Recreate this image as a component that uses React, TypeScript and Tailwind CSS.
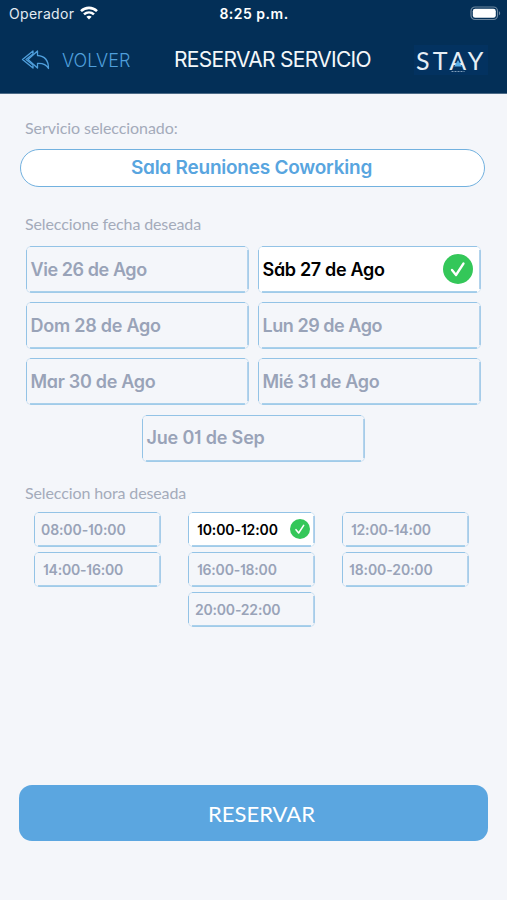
import { useState } from 'react'

interface Slot {
  label: string
  style: string
}

const days: Slot[] = [
  { label: 'Vie 26 de Ago', style: 'tracking-[-0.42px]' },
  { label: 'Sáb 27 de Ago', style: 'tracking-[-0.32px]' },
  { label: 'Dom 28 de Ago', style: 'tracking-[-0.25px]' },
  { label: 'Lun 29 de Ago', style: 'tracking-[-0.46px]' },
  { label: 'Mar 30 de Ago', style: 'tracking-[-0.3px]' },
  { label: 'Mié 31 de Ago', style: 'tracking-[-0.35px]' },
  { label: 'Jue 01 de Sep', style: 'tracking-[-0.18px]' },
]

const hours: Slot[] = [
  { label: '08:00-10:00', style: 'pl-[6px] tracking-[-0.1px]' },
  { label: '10:00-12:00', style: 'pl-[8px] tracking-[-0.1px]' },
  { label: '12:00-14:00', style: 'pl-[8px] tracking-[-0.2px]' },
  { label: '14:00-16:00', style: 'pl-[8px] tracking-[-0.2px]' },
  { label: '16:00-18:00', style: 'pl-[8px] tracking-[-0.2px]' },
  { label: '18:00-20:00', style: 'pl-[6px] tracking-[-0.1px]' },
  { label: '20:00-22:00', style: 'pl-[6px] tracking-[-0.2px]' },
]

// edge lines that stop short of the corners, over a faint full outline
const edges =
  'rounded-[5px] border border-[#93c4e7]/40 bg-origin-border bg-no-repeat bg-[image:linear-gradient(#93c4e7,#93c4e7),linear-gradient(#a9d0eb,#a9d0eb),linear-gradient(#93c4e7,#93c4e7),linear-gradient(#b3d3ec,#b3d3ec)] bg-[position:center_top,center_bottom,left_center,right_center] bg-[size:calc(100%_-_8px)_1px,calc(100%_-_8px)_2px,1px_calc(100%_-_8px),2px_calc(100%_-_8px)]'

function CheckBadge({ className }: { className: string }) {
  return (
    <svg viewBox="0 0 30 30" className={className}>
      <circle cx="15" cy="15" r="15" fill="#34c759" />
      <path d="M9 16l4 5L20.500 9.500" fill="none" stroke="#fff" strokeWidth="2.3" strokeLinecap="round" strokeLinejoin="round" />
    </svg>
  )
}

function StatusBar() {
  return (
    <div className="grid h-7 grid-cols-3 items-center pl-[9px] pr-[6px] text-[14px] text-white">
      <div className="flex items-center gap-[5px]">
        <span className="-mt-px w-[66px] tracking-[0.3px] text-[#e3ebf2]">Operador</span>
        <svg viewBox="0 0 18 14" className="-mt-0.5 h-[14px] w-[18px]" fill="none" stroke="#fff" strokeWidth="2.6">
          <path d="M1 5.1C5.5.8 12.5.8 17 5.1" />
          <path d="M4 8.400c2.900-2.600 7.100-2.600 10 0" />
          <path d="M6.400 10.700c1.500-1.300 3.700-1.300 5.200 0L9 13.600z" fill="#fff" stroke="none" />
        </svg>
      </div>
      <span className="-ml-[2px] -mt-px text-center font-semibold tracking-[0.5px]">8:25 p.m.</span>
      <svg viewBox="0 0 31 15" className="-mt-0.5 h-[15px] w-[31px] justify-self-end">
        <rect x="1" y="1" width="26.5" height="12.5" rx="4" fill="none" stroke="#6d879f" strokeWidth="1.2" />
        <rect x="2.800" y="2.800" width="23" height="9" rx="2.4" fill="#fff" />
        <path d="M29 5.300c1.600.7 1.600 3.300 0 4z" fill="#6d879f" />
      </svg>
    </div>
  )
}

function Logo() {
  return (
    <div className="relative h-[30px] w-[74px] bg-[#03366a]/50">
      <span className="block pl-[2px] font-['Lato',sans-serif] text-[25px] leading-[30px] tracking-[3.3px] text-[#e6eef5]">STAY</span>
      <svg viewBox="0 0 20 14" className="absolute left-[34px] top-[14px] h-[14px] w-[20px]">
        <path d="M10 1l3.800 6.500H6.200z" fill="#58aee8" />
        <path d="M3.500 12.500h13" stroke="#7f9cb8" strokeWidth="1" strokeDasharray="2 1" />
      </svg>
    </div>
  )
}

export default function App() {
  const [day, setDay] = useState('Sáb 27 de Ago')
  const [hour, setHour] = useState('10:00-12:00')

  return (
    <div className="flex h-[900px] w-[507px] flex-col bg-[#f4f6fa] font-['Inter',sans-serif]">
      <header className="h-[94px] border-b border-[#4c6b87] bg-[#032f57]">
        <StatusBar />
        <div className="flex h-[64px] items-center pl-[21px] pr-[19px]">
          <button className="flex w-[153px] items-center gap-3 text-[18px] font-light text-[#4f9fdc]">
            <svg viewBox="0 0 29 20" className="h-5 w-[29px]" fill="none" stroke="#4f9fdc" strokeWidth="1.3" strokeLinejoin="round">
              <path d="M16.500 1L7 9.500l9.500 8.500v-4.500c5-.3 8.500.5 11 5C27.500 10 23 6 16.500 5.500z" />
              <path d="M12 1L1.500 9.500 12 18v-3L5 9.500 12 4z" />
            </svg>
            VOLVER
          </button>
          <h1 className="w-[240px] text-[21px] tracking-[-0.7px] whitespace-nowrap text-[#f3f7fa]">RESERVAR SERVICIO</h1>
          <Logo />
        </div>
      </header>

      <main className="flex flex-1 flex-col">
        <p className="mt-[24px] pl-[25px] font-['Lato',sans-serif] text-[16px] leading-5 tracking-[-0.07px] text-[#a4abba]">Servicio seleccionado:</p>
        <div className="ml-5 mr-[22px] mt-[11px] flex h-[38px] items-center justify-center rounded-full border-[1.5px] border-[#72b1df] bg-white pr-[2px] pt-px text-[19px] font-semibold tracking-[-0.23px] text-[#58a5df] [font-feature-settings:'cv11']">
          Sala Reuniones Coworking
        </div>
        <p className="mt-[27px] pl-[25px] font-['Lato',sans-serif] text-[16px] leading-5 tracking-[-0.12px] text-[#a4abba]">Seleccione fecha deseada</p>

        <div className="mt-[12px] flex flex-wrap justify-center gap-x-[9px] gap-y-[9.200px] pl-[24px] pr-[25px]">
          {days.map((d) => (
            <button
              key={d.label}
              onClick={() => setDay(d.label)}
              className={`flex h-[47px] w-[223px] items-center justify-between pb-px pl-[4px] pr-[7px] text-[18px] font-semibold [font-feature-settings:'cv11','cv01'] ${edges} ${d.style} ${
                day === d.label ? 'bg-white text-black' : 'text-[#99a3b8]'
              }`}
            >
              {d.label}
              {day === d.label && <CheckBadge className="h-[30px] w-[30px]" />}
            </button>
          ))}
        </div>

        <p className="mt-[21px] pl-[25px] font-['Lato',sans-serif] text-[16px] leading-5 tracking-[-0.12px] text-[#a4abba]">Seleccion hora deseada</p>
        <div className="mt-[9px] flex flex-wrap justify-center gap-x-[27px] gap-y-[5.400px] pl-[18px] pr-[22px]">
          {hours.map((h) => (
            <button
              key={h.label}
              onClick={() => setHour(h.label)}
              className={`flex h-[35px] w-[127px] items-center justify-between pr-[4px] text-[14px] font-semibold [font-feature-settings:'cv11','cv01'] ${edges} ${h.style} ${
                hour === h.label ? 'bg-white text-black' : 'text-[#99a3b8]'
              }`}
            >
              {h.label}
              {hour === h.label && <CheckBadge className="h-5 w-5" />}
            </button>
          ))}
        </div>

        <button className="mx-[19px] mt-auto mb-[59px] h-[56px] rounded-[13px] bg-[#5ba6e0] pl-4 font-['Lato',sans-serif] text-[22px] text-white">
          RESERVAR
        </button>
      </main>
    </div>
  )
}
